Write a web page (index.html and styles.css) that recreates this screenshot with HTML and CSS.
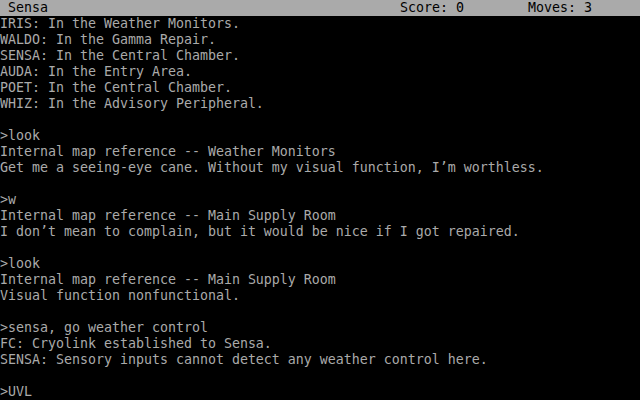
FILE: index.html
```html
<!DOCTYPE html>
<html>
<head>
<meta charset="utf-8">
<link rel="stylesheet" href="styles.css">
</head>
<body>
<div class="screen">
  <div class="status">
    <span class="loc">Sensa</span><span class="score">Score: 0</span><span class="moves">Moves: 3</span>
  </div>
  <div class="transcript">
<div class="line">IRIS: In the Weather Monitors.</div>
<div class="line">WALDO: In the Gamma Repair.</div>
<div class="line">SENSA: In the Central Chamber.</div>
<div class="line">AUDA: In the Entry Area.</div>
<div class="line">POET: In the Central Chamber.</div>
<div class="line">WHIZ: In the Advisory Peripheral.</div>
<div class="line"> </div>
<div class="line">&gt;look</div>
<div class="line">Internal map reference -- Weather Monitors</div>
<div class="line">Get me a seeing-eye cane. Without my visual function, I’m worthless.</div>
<div class="line"> </div>
<div class="line">&gt;w</div>
<div class="line">Internal map reference -- Main Supply Room</div>
<div class="line">I don’t mean to complain, but it would be nice if I got repaired.</div>
<div class="line"> </div>
<div class="line">&gt;look</div>
<div class="line">Internal map reference -- Main Supply Room</div>
<div class="line">Visual function nonfunctional.</div>
<div class="line"> </div>
<div class="line">&gt;sensa, go weather control</div>
<div class="line">FC: Cryolink established to Sensa.</div>
<div class="line">SENSA: Sensory inputs cannot detect any weather control here.</div>
<div class="line"> </div>
<div class="line">&gt;UVL</div>
  </div>
</div>
</body>
</html>
```
FILE: styles.css
```css
html, body {
  margin: 0;
  padding: 0;
  background: #000;
}
.screen {
  width: 640px;
  height: 400px;
  overflow: hidden;
  background: #000;
  font-family: "DejaVu Sans Mono", "Liberation Mono", monospace;
  font-size: 13.29px;
  line-height: 16px;
  color: #aaaaaa;
}
.status {
  display: flex;
  height: 16px;
  background: #aaaaaa;
  color: #000;
  padding-left: 8px;
  white-space: pre;
}
.loc {
  width: 392px;
}
.score {
  width: 128px;
}
.transcript {
  display: flex;
  flex-direction: column;
}
.line {
  height: 16px;
  white-space: pre;
}
```
